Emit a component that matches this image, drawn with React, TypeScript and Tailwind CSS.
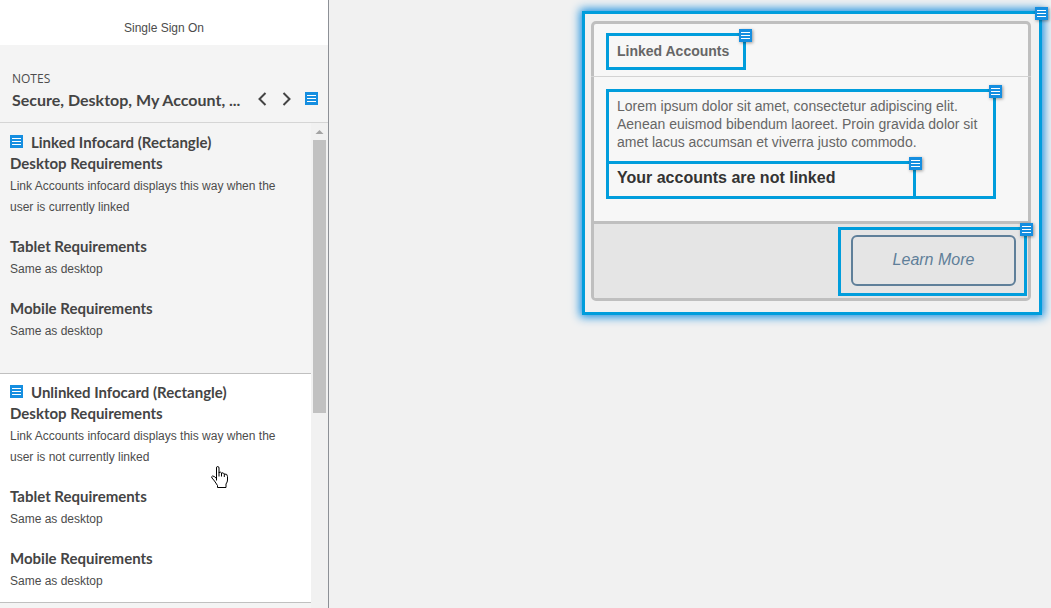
import React from "react";

function NoteIcon({ className = "" }: { className?: string }) {
  return (
    <svg viewBox="0 0 13 13" className={`block size-[13px] shrink-0 ${className}`} shapeRendering="crispEdges" aria-hidden="true">
      <rect width="13" height="13" fill="#158ee0" />
      <path d="M2 3h9v1H2zM2 6h9v1H2zM2 9h9v1H2z" fill="#fff" />
    </svg>
  );
}

function Marker() {
  return (
    <button
      type="button"
      aria-label="Open note"
      className="absolute -top-[7px] -right-[9px] z-10 shadow-[1px_1px_3px_rgba(0,0,0,0.4)]"
    >
      <NoteIcon />
    </button>
  );
}

function Requirement({ title, children }: { title: string; children: React.ReactNode }) {
  return (
    <div>
      <h3 className="font-['Lato',sans-serif] text-[15px] leading-[21px] font-bold text-[#444]">{title}</h3>
      <p className="mt-0.5 text-xs leading-[21px]">{children}</p>
    </div>
  );
}

function Note({ title, desktop, className }: { title: string; desktop: string; className: string }) {
  return (
    <article className={`border-b border-[#c0c0c0] px-2.5 ${className}`}>
      <h2 className="flex items-center gap-2 font-['Lato',sans-serif] text-[15px] leading-[21px] font-bold text-[#444]">
        <NoteIcon className="mb-0.5" />
        {title}
      </h2>
      <div className="flex flex-col gap-[18px]">
        <Requirement title="Desktop Requirements">{desktop}</Requirement>
        <Requirement title="Tablet Requirements">Same as desktop</Requirement>
        <Requirement title="Mobile Requirements">Same as desktop</Requirement>
      </div>
    </article>
  );
}

function HandCursor() {
  return (
    <svg viewBox="0 0 17 22" className="absolute top-[343px] left-[211px] h-[22px] w-[17px]" aria-hidden="true">
      <path
        d="M5.5 14.5V2Q5.5 .5 6.5 .5Q8 .5 8 2V6.5Q9.500 5.500 10.500 7Q12.500 6.200 13.300 8Q16.500 7.500 16.500 10.500V14Q16.500 16 15 18V21.500H6.500V19.500L3.500 15L1 12Q0 10.500 1.500 10Q3 9.700 5.500 12.500"
        fill="#fff"
        stroke="#000"
        strokeLinejoin="round"
      />
      <path d="M8 6v4.500M10.500 7v3.500M13.300 8v3" fill="none" stroke="#000" />
    </svg>
  );
}

export default function App() {
  return (
    <div className="flex h-screen overflow-hidden bg-[#f1f1f1] font-['Liberation_Sans',Arial,sans-serif] text-[#4c4c4c]">
      <aside className="flex w-[329px] shrink-0 flex-col border-r border-[#8d9096] bg-[#f4f4f4]">
        <div className="bg-white pt-[18px] pb-[7px] text-center text-xs leading-5">Single Sign On</div>
        <header className="border-b border-[#d5d5d5] pt-6 pr-2.5 pb-3 pl-3">
          <div className="font-['Open_Sans',sans-serif] text-xs leading-5">NOTES</div>
          <div className="flex items-center">
            <h1 className="min-w-0 flex-1 truncate font-['Lato',sans-serif] text-base leading-[21px] font-bold text-[#444]">
              Secure, Desktop, My Account, ...
            </h1>
            <button type="button" aria-label="Previous page" className="mb-0.5 ml-2">
              <svg viewBox="0 0 10 14" className="block h-3.5 w-2.5" fill="none" stroke="#444" strokeWidth="2">
                <path d="M8.500 1L2.500 7L8.500 13" />
              </svg>
            </button>
            <button type="button" aria-label="Next page" className="mb-0.5 ml-3.5">
              <svg viewBox="0 0 10 14" className="block h-3.5 w-2.5" fill="none" stroke="#444" strokeWidth="2">
                <path d="M2.500 1L8.500 7L2.500 13" />
              </svg>
            </button>
            <button type="button" aria-label="Toggle notes" className="mb-0.5 ml-3.5">
              <NoteIcon />
            </button>
          </div>
        </header>
        <div className="relative flex min-h-0 flex-1">
          <div className="min-w-0 flex-1 overflow-hidden">
            <Note
              title="Linked Infocard (Rectangle)"
              desktop="Link Accounts infocard displays this way when the user is currently linked"
              className="pt-[9px] pb-[31px]"
            />
            <Note
              title="Unlinked Infocard (Rectangle)"
              desktop="Link Accounts infocard displays this way when the user is not currently linked"
              className="bg-white pt-2 pb-2.5"
            />
          </div>
          <div className="flex w-[17px] shrink-0 flex-col items-center bg-[#f1f1f1]" aria-hidden="true">
            <svg viewBox="0 0 17 17" className="block size-[17px]">
              <path d="M4.500 11L8.500 7L12.500 11z" fill="#a3a3a3" />
            </svg>
            <div className="h-[273px] w-[13px] bg-[#c1c1c1]" />
          </div>
          <HandCursor />
        </div>
      </aside>

      <main className="flex min-w-0 flex-1 items-start justify-end pt-[11px] pr-[9px]">
        <div className="relative w-[460px] border-3 border-[#009ddc] pt-[7px] pr-2 pb-[11px] pl-1.5 shadow-[0_0_9px_2px_#158ee0]">
          <Marker />
          <section className="rounded-[5px] border-3 border-[#bfbfbf] bg-[#f7f7f7]">
            <div className="-mx-[3px] flex border-b border-[#d3d3d3] px-[15px] pt-[9px] pb-1.5">
              <div className="relative w-[140px] border-3 border-[#009ddc] pt-1.5 pb-[7px] pl-2">
                <Marker />
                <h2 className="text-sm leading-[18px] font-bold text-[#666]">Linked Accounts</h2>
              </div>
            </div>
            <div className="px-3 pt-3 pb-[22px]">
              <div className="relative w-[390px] border-3 border-[#009ddc] pt-[5px]">
                <Marker />
                <p className="px-2 pb-2.5 text-sm leading-[18px] text-[#666]">
                  Lorem ipsum dolor sit amet, consectetur adipiscing elit. Aenean euismod bibendum laoreet. Proin gravida
                  dolor sit amet lacus accumsan et viverra justo commodo.
                </p>
                <div className="relative -mb-[3px] -ml-[3px] w-[310px] border-3 border-[#009ddc] px-2 pt-1 pb-2">
                  <Marker />
                  <p className="text-base leading-5 font-bold text-[#333]">Your accounts are not linked</p>
                </div>
              </div>
            </div>
            <footer className="flex justify-end rounded-b-[2px] border-t-3 border-[#bfbfbf] bg-[#e5e5e5] pt-[3px] pr-px pb-0.5">
              <div className="relative border-3 border-[#009ddc] pt-[5px] pr-2 pb-[7px] pl-2.5">
                <Marker />
                <button
                  type="button"
                  className="block h-[51px] w-[165px] rounded-md border-2 border-[#5f7f99] pb-0.5 text-base text-[#5f7f99] italic"
                >
                  Learn More
                </button>
              </div>
            </footer>
          </section>
        </div>
      </main>
    </div>
  );
}
